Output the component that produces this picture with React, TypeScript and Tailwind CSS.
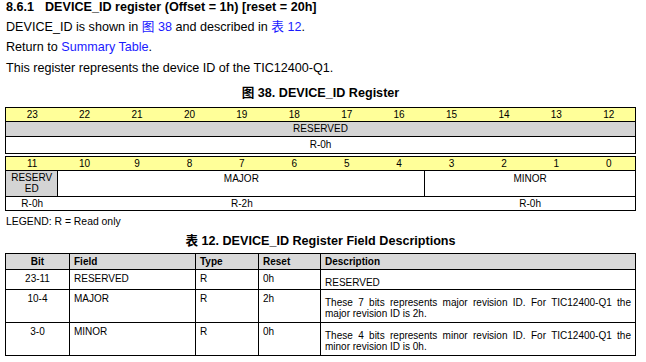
const font = { fontFamily: '"Liberation Sans", Arial, "Noto Sans CJK SC", sans-serif' }

const bitsHigh = [23, 22, 21, 20, 19, 18, 17, 16, 15, 14, 13, 12]
const bitsLow = [11, 10, 9, 8, 7, 6, 5, 4, 3, 2, 1, 0]

interface FieldRow {
  bit: string
  field: string
  type: string
  reset: string
  desc: string
  tall?: boolean
}

const fields: FieldRow[] = [
  { bit: '23-11', field: 'RESERVED', type: 'R', reset: '0h', desc: 'RESERVED' },
  {
    bit: '10-4',
    field: 'MAJOR',
    type: 'R',
    reset: '2h',
    desc: 'These 7 bits represents major revision ID. For TIC12400-Q1 the major revision ID is 2h.',
    tall: true
  },
  {
    bit: '3-0',
    field: 'MINOR',
    type: 'R',
    reset: '0h',
    desc: 'These 4 bits represents minor revision ID. For TIC12400-Q1 the minor revision ID is 0h.',
    tall: true
  }
]

function BitRow({ bits }: { bits: number[] }) {
  return (
    <div className="grid grid-cols-12 h-[14px] bg-[#ffff99] border-b border-black">
      {bits.map(b => (
        <div key={b} className="text-center text-[10px] leading-[13px]">
          {b}
        </div>
      ))}
    </div>
  )
}

export default function App() {
  return (
    <div className="w-[646px] h-[362px] bg-white text-black pl-[5px] pr-[10px]" style={font}>
      <h3 className="text-[12.6px] font-bold leading-[14px] flex">
        <span className="w-[40px] pl-[1px]">8.6.1</span>
        <span>DEVICE_ID register (Offset = 1h) [reset = 20h]</span>
      </h3>
      <p className="mt-[3px] text-[12.6px] leading-[20px] pl-[1px]">
        DEVICE_ID is shown in <span className="text-[#1a1aff]">图 38</span> and described in{' '}
        <span className="text-[#1a1aff]">表 12</span>.
      </p>
      <p className="text-[12.6px] leading-[20px] pl-[1px]">
        Return to <span className="text-[#1a1aff]">Summary Table</span>.
      </p>
      <p className="mt-[1px] text-[12.6px] leading-[20px] pl-[1px]">
        This register represents the device ID of the TIC12400-Q1.
      </p>

      <div className="mt-[8px] text-center text-[12.6px] font-bold leading-[14px]">
        图 38. DEVICE_ID Register
      </div>

      {/* register map */}
      <div className="mt-[7px] w-[631px]">
        <div className="border border-black">
          <BitRow bits={bitsHigh} />
          <div className="h-[15px] bg-[#d4d4d4] border-b border-black text-center text-[10px] leading-[14px]">
            RESERVED
          </div>
          <div className="h-[16px] text-center text-[10px] leading-[16px]">R-0h</div>
        </div>
        <div className="mt-[2px] border border-black">
          <BitRow bits={bitsLow} />
          <div className="grid grid-cols-12 h-[26px] border-b border-black text-[10px]">
            <div className="col-span-1 bg-[#d4d4d4] border-r border-black text-center leading-[11px] pt-[1px]">
              RESERV
              <br />
              ED
            </div>
            <div className="col-span-7 border-r border-black text-center leading-[14px] pt-[1px]">MAJOR</div>
            <div className="col-span-4 text-center leading-[14px] pt-[1px]">MINOR</div>
          </div>
          <div className="grid grid-cols-12 h-[13px] text-[10px] leading-[13px] text-center">
            <div className="col-span-1">R-0h</div>
            <div className="col-span-7">R-2h</div>
            <div className="col-span-4">R-0h</div>
          </div>
        </div>
      </div>

      <div className="mt-[5px] text-[10.4px] leading-[12px] pl-[1px]">LEGEND: R = Read only</div>

      <div className="mt-[6px] text-center text-[12.6px] font-bold leading-[14px]">
        表 12. DEVICE_ID Register Field Descriptions
      </div>

      {/* field descriptions */}
      <table className="mt-[5px] w-[631px] table-fixed border-collapse border border-black text-[10px]">
        <colgroup>
          <col className="w-[64px]" />
          <col className="w-[126px]" />
          <col className="w-[63px]" />
          <col className="w-[62px]" />
          <col />
        </colgroup>
        <thead>
          <tr className="bg-[#d9d9d9] h-[16px]">
            <th className="border border-black font-bold text-center leading-[12px] align-middle">Bit</th>
            <th className="border border-black font-bold text-left px-[4px] leading-[12px]">Field</th>
            <th className="border border-black font-bold text-left px-[4px] leading-[12px]">Type</th>
            <th className="border border-black font-bold text-left px-[4px] leading-[12px]">Reset</th>
            <th className="border border-black font-bold text-left px-[4px] leading-[12px]">Description</th>
          </tr>
        </thead>
        <tbody>
          {fields.map(f => (
            <tr key={f.bit} className={f.tall ? 'h-[33px]' : 'h-[20px]'}>
              <td className="border border-black align-top text-center pt-[3px] leading-[12px]">{f.bit}</td>
              <td className="border border-black align-top px-[4px] pt-[3px] leading-[12px]">{f.field}</td>
              <td className="border border-black align-top px-[4px] pt-[3px] leading-[12px]">{f.type}</td>
              <td className="border border-black align-top px-[4px] pt-[3px] leading-[12px]">{f.reset}</td>
              <td className="border border-black align-top px-[4px] pt-[7px] leading-[11px] text-justify">
                {f.desc}
              </td>
            </tr>
          ))}
        </tbody>
      </table>
    </div>
  )
}
